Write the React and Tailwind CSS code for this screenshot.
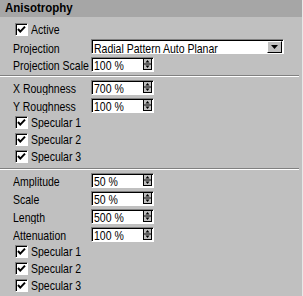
import React from "react";

const FONT = { fontFamily: '"Liberation Sans", Arial, sans-serif' };

function CheckBox() {
  return (
    <span className="box-border w-[13px] h-[13px] shrink-0 border border-t-[#808080] border-l-[#808080] border-b-white border-r-white bg-white shadow-[inset_1px_1px_0_#000] flex items-center justify-center">
      <svg width="9" height="9" viewBox="0 0 9 9">
        <polyline points="1,4 3.3,6.6 8,1.6" fill="none" stroke="#000" strokeWidth="2" />
      </svg>
    </span>
  );
}

function Txt({ children, className = "" }) {
  return (
    <span className={`inline-block whitespace-nowrap text-[10.5px] leading-none text-black scale-y-[1.15] ${className}`}>
      {children}
    </span>
  );
}

function CheckRow({ label }) {
  return (
    <div className="h-[17px] flex items-center pl-[15px]">
      <CheckBox />
      <Txt className="ml-[3px]">{label}</Txt>
    </div>
  );
}

function Spinner() {
  return (
    <svg width="9" height="12" viewBox="0 0 9 12" className="shrink-0">
      <rect x="0.5" y="0.5" width="8" height="11" fill="#c0c0c0" stroke="#000" />
      <line x1="1" y1="6" x2="8" y2="6" stroke="#000" />
      <polygon points="4.5,2 2.5,4.5 6.5,4.5" fill="#000" />
      <polygon points="4.5,10 2.5,7.5 6.5,7.5" fill="#000" />
    </svg>
  );
}

function NumField({ value }) {
  return (
    <div className="box-border w-[63px] h-[15px] border border-t-[#808080] border-l-[#808080] border-b-white border-r-white bg-white shadow-[inset_1px_1px_0_#000] flex items-center pl-[2px] pr-[1px]">
      <div className="flex-1">
        <Txt>{value}</Txt>
      </div>
      <Spinner />
    </div>
  );
}

function FieldRow({ label, value }) {
  return (
    <div className="h-[18px] flex items-center pl-[13px]">
      <div className="w-[78px]">
        <Txt>{label}</Txt>
      </div>
      <NumField value={value} />
    </div>
  );
}

function Separator({ mt }) {
  return (
    <div className={`${mt} mr-[3px]`}>
      <div className="h-px bg-[#808080]" />
      <div className="h-px bg-white" />
    </div>
  );
}

export default function App() {
  return (
    <div style={FONT} className="w-[303px] h-[296px] bg-[#c0c0c0] border-r border-[#e8e8e8] box-border flex flex-col overflow-hidden">
      <div className="h-[17px] bg-[#a6a6a6] flex items-center pl-[5px]">
        <span className="inline-block text-[11.5px] font-bold leading-none text-black scale-y-[1.15]">Anisotrophy</span>
      </div>

      <div className="mt-[3px] h-[18px] flex items-center pl-[15px]">
        <CheckBox />
        <Txt className="ml-[3px]">Active</Txt>
      </div>

      <div className="h-[17px] flex items-center pl-[13px]">
        <div className="w-[78px]">
          <Txt>Projection</Txt>
        </div>
        <div className="box-border w-[193px] h-[15px] border border-t-[#808080] border-l-[#808080] border-b-white border-r-white bg-white shadow-[inset_1px_1px_0_#000] flex items-center pl-[2px] pr-[1px]">
          <div className="flex-1">
            <Txt>Radial Pattern Auto Planar</Txt>
          </div>
          <span className="box-border w-[15px] h-[12px] bg-[#c0c0c0] border border-t-white border-l-white border-b-black border-r-black flex items-center justify-center">
            <svg width="7" height="4" viewBox="0 0 7 4">
              <polygon points="0,0 7,0 3.5,4" fill="#000" />
            </svg>
          </span>
        </div>
      </div>

      <FieldRow label="Projection Scale" value="100 %" />

      <Separator mt="mt-[2px]" />

      <div className="mt-px">
        <FieldRow label="X Roughness" value="700 %" />
        <FieldRow label="Y Roughness" value="100 %" />
      </div>
      <CheckRow label="Specular 1" />
      <CheckRow label="Specular 2" />
      <CheckRow label="Specular 3" />

      <Separator mt="mt-[3px]" />

      <div className="mt-px">
        <FieldRow label="Amplitude" value="50 %" />
        <FieldRow label="Scale" value="50 %" />
        <FieldRow label="Length" value="500 %" />
        <FieldRow label="Attenuation" value="100 %" />
      </div>
      <CheckRow label="Specular 1" />
      <CheckRow label="Specular 2" />
      <CheckRow label="Specular 3" />
    </div>
  );
}
